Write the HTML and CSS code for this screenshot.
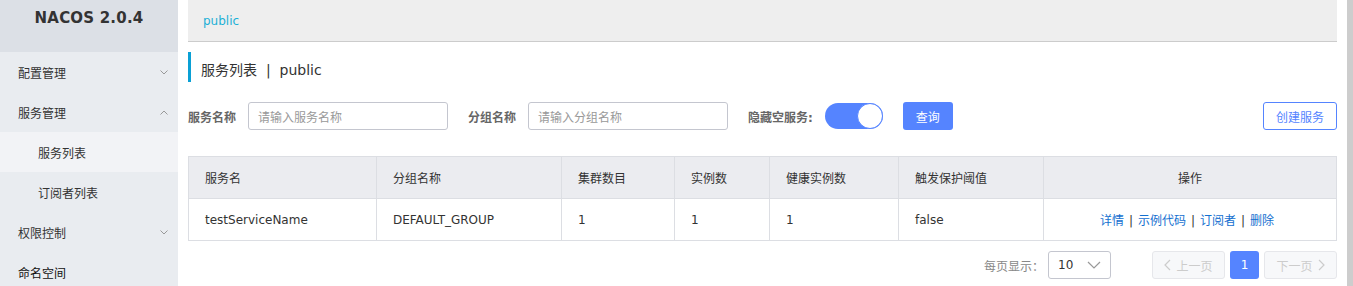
FILE: index.html
```html
<!DOCTYPE html>
<html lang="zh">
<head>
<meta charset="utf-8">
<title>Nacos</title>
<link rel="stylesheet" href="styles.css">
</head>
<body>
<div class="page">
  <aside class="sidebar">
    <div class="brand">NACOS 2.0.4</div>
    <ul class="menu">
      <li class="item"><span>配置管理</span><svg class="chev" viewBox="0 0 8 5" width="8" height="5"><path d="M0.5 0.5 L4 4 L7.5 0.5" fill="none" stroke="#999" stroke-width="1"/></svg></li>
      <li class="item"><span>服务管理</span><svg class="chev" viewBox="0 0 8 5" width="8" height="5"><path d="M0.5 4.5 L4 1 L7.5 4.5" fill="none" stroke="#999" stroke-width="1"/></svg></li>
      <li class="item sub active"><span>服务列表</span></li>
      <li class="item sub"><span>订阅者列表</span></li>
      <li class="item"><span>权限控制</span><svg class="chev" viewBox="0 0 8 5" width="8" height="5"><path d="M0.5 0.5 L4 4 L7.5 0.5" fill="none" stroke="#999" stroke-width="1"/></svg></li>
      <li class="item strong"><span>命名空间</span></li>
    </ul>
  </aside>
  <main class="main">
    <div class="nsbar"><span class="ns">public</span></div>
    <h1 class="title">服务列表&nbsp;&nbsp;|&nbsp;&nbsp;public</h1>
    <div class="filters">
      <label class="flabel">服务名称</label>
      <div class="input"><span class="ph">请输入服务名称</span></div>
      <label class="flabel">分组名称</label>
      <div class="input"><span class="ph">请输入分组名称</span></div>
      <label class="flabel">隐藏空服务:</label>
      <div class="switch"><span class="knob"></span></div>
      <button class="btn primary">查询</button>
      <span class="spacer"></span>
      <button class="btn outline">创建服务</button>
    </div>
    <table class="table">
      <colgroup>
        <col class="c1"><col class="c2"><col class="c3"><col class="c4"><col class="c5"><col class="c6"><col class="c7">
      </colgroup>
      <thead>
        <tr><th>服务名</th><th>分组名称</th><th>集群数目</th><th>实例数</th><th>健康实例数</th><th>触发保护阈值</th><th class="center">操作</th></tr>
      </thead>
      <tbody>
        <tr>
          <td>testServiceName</td><td>DEFAULT_GROUP</td><td>1</td><td>1</td><td>1</td><td>false</td>
          <td class="center ops"><a class="link">详情</a><span class="sep">|</span><a class="link">示例代码</a><span class="sep">|</span><a class="link">订阅者</a><span class="sep">|</span><a class="link">删除</a></td>
        </tr>
      </tbody>
    </table>
    <div class="pager">
      <span class="psize">每页显示：</span>
      <div class="select"><span>10</span><svg viewBox="0 0 14 8" width="14" height="8"><path d="M1 1 L7 7 L13 1" fill="none" stroke="#999" stroke-width="1.2"/></svg></div>
      <button class="pbtn disabled prev"><svg viewBox="0 0 7 12" width="7" height="12"><path d="M6 1 L1 6 L6 11" fill="none" stroke="#ccc" stroke-width="1.2"/></svg>上一页</button>
      <button class="pbtn current">1</button>
      <button class="pbtn disabled next">下一页<svg viewBox="0 0 7 12" width="7" height="12"><path d="M1 1 L6 6 L1 11" fill="none" stroke="#ccc" stroke-width="1.2"/></svg></button>
    </div>
  </main>
  <div class="scroll"></div>
</div>
</body>
</html>
```

FILE: styles.css
```css
* { box-sizing: border-box; }
html, body { margin: 0; padding: 0; }
body {
  font-family: "DejaVu Sans", "Noto Sans CJK SC", sans-serif;
  font-size: 12px;
  color: #333;
  background: #fff;
  width: 1353px;
  height: 286px;
  overflow: hidden;
}
.page { display: flex; height: 286px; }

.sidebar { width: 178px; flex: none; background: #e9ecf0; }
.brand {
  height: 52px;
  background: #dce0e6;
  font-weight: bold;
  font-size: 15px;
  color: #333;
  text-align: center;
  padding-top: 9px;
  letter-spacing: 0.2px;
}
.menu { list-style: none; margin: 0; padding: 0; }
.item {
  height: 40px;
  display: flex;
  align-items: center;
  justify-content: space-between;
  padding: 0 10px 0 18px;
  font-size: 12px;
  color: #333;
}
.item.sub { padding-left: 38px; }
.item.active { background: #f2f3f6; }
.item.strong { color: #111; }
.chev { display: block; }

.main { flex: 1; padding: 0 10px; min-width: 0; }
.nsbar {
  height: 42px;
  background: #eee;
  border-bottom: 1px solid #ccc;
  display: flex;
  align-items: center;
  padding-left: 15px;
}
.ns { color: #1cb0d6; font-size: 12px; }
.title {
  margin: 10px 0 0;
  height: 30px;
  border-left: 3px solid #0aa0d5;
  padding-left: 10px;
  padding-top: 3px;
  font-size: 14px;
  font-weight: normal;
  color: #333;
  display: flex;
  align-items: center;
}

.filters {
  margin-top: 20px;
  display: flex;
  align-items: center;
  height: 28px;
}
.flabel { font-weight: bold; color: #666; font-size: 12px; margin-right: 12px; }
.input {
  width: 200px;
  height: 28px;
  border: 1px solid #c4c6cf;
  border-radius: 3px;
  padding-left: 9px;
  display: flex;
  align-items: center;
  margin-right: 20px;
}
.ph { color: #999; font-size: 12px; }
.switch {
  width: 58px;
  height: 26px;
  border-radius: 13px;
  background: #5584ff;
  display: flex;
  align-items: center;
  justify-content: flex-end;
  margin-right: 20px;
}
.knob {
  width: 26px;
  height: 26px;
  border-radius: 50%;
  background: #fff;
  border: 1px solid #5584ff;
}
.btn {
  font-family: inherit;
  font-size: 12px;
  height: 28px;
  border-radius: 3px;
  padding: 0;
  cursor: pointer;
}
.btn.primary { width: 50px; background: #5584ff; border: none; color: #fff; }
.spacer { flex: 1; }
.btn.outline { width: 74px; background: #fff; border: 1px solid #5584ff; color: #5584ff; }

.table {
  margin-top: 26px;
  width: 100%;
  border-collapse: collapse;
  table-layout: fixed;
}
.c1 { width: 188px; } .c2 { width: 185px; } .c3 { width: 113px; } .c4 { width: 95px; }
.c5 { width: 129px; } .c6 { width: 145px; } .c7 { width: auto; }
.table th, .table td {
  border: 1px solid #dcdee3;
  height: 42px;
  padding: 0 16px;
  text-align: left;
  font-size: 12px;
  color: #333;
  white-space: nowrap;
}
.table th { background: #ebecf0; font-weight: normal; }
.table .center { text-align: center; }
.table .ops { padding-right: 22px; }
.link { color: #1470d0; }
.sep { color: #333; margin: 0 5px; }

.pager {
  margin-top: 10px;
  display: flex;
  align-items: center;
  justify-content: flex-end;
  height: 28px;
}
.psize { color: #888; font-size: 12px; margin-right: 4px; }
.select {
  width: 63px;
  height: 28px;
  border: 1px solid #c4c6cf;
  border-radius: 3px;
  display: flex;
  align-items: center;
  justify-content: space-between;
  padding: 0 9px 0 9px;
  margin-right: 41px;
  font-size: 12px;
  color: #333;
}
.pbtn {
  font-family: inherit;
  font-size: 12px;
  height: 28px;
  border-radius: 3px;
  padding: 0;
  display: flex;
  align-items: center;
  justify-content: center;
  gap: 5px;
}
.pbtn.disabled { width: 73px; background: #f7f8fa; border: 1px solid #e6e7eb; color: #ccc; }
.pbtn.current { width: 29px; margin: 0 5px; background: #5584ff; border: none; color: #fff; }

.scroll { width: 6px; flex: none; background: #cdcdcd; }
```
